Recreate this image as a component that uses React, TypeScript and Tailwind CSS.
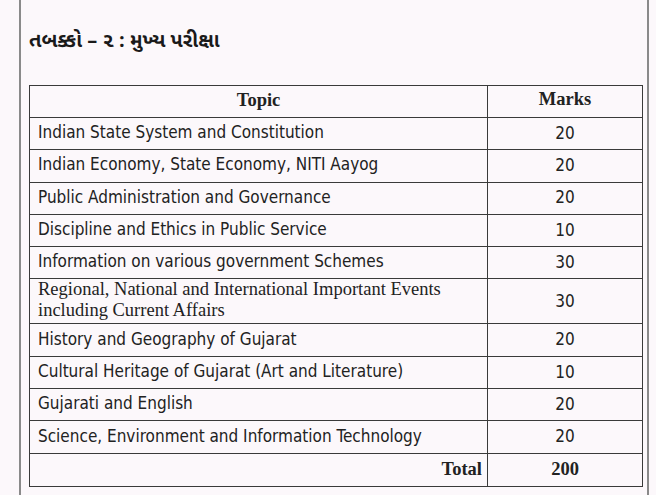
const rows: { topic: string; marks: number; serif?: boolean; tall?: boolean }[] = [
  { topic: "Indian State System and Constitution", marks: 20 },
  { topic: "Indian Economy, State Economy, NITI Aayog", marks: 20 },
  { topic: "Public Administration and Governance", marks: 20 },
  { topic: "Discipline and Ethics in Public Service", marks: 10 },
  { topic: "Information on various government Schemes", marks: 30 },
  {
    topic: "Regional, National and International Important Events including Current Affairs",
    marks: 30,
    serif: true,
    tall: true,
  },
  { topic: "History and Geography of Gujarat", marks: 20 },
  { topic: "Cultural Heritage of Gujarat (Art and Literature)", marks: 10 },
  { topic: "Gujarati and English", marks: 20 },
  { topic: "Science, Environment and Information Technology", marks: 20 },
];

const narrow = "font-['Liberation_Sans_Narrow','DejaVu_Sans_Condensed',sans-serif]";
const serif = "font-['Liberation_Serif','Times_New_Roman',serif]";

export default function App() {
  return (
    <div className="w-[656px] h-[495px] bg-[#fcf8fb] overflow-hidden">
      <div className="ml-[19px] w-[630px] h-full border-l-2 border-r-2 border-[#8a8a8a] pl-[8px] pr-[4px]">
        <h2 className="pt-[27px] h-[85px] text-[20px] font-bold text-[#1a1a1a] font-['Noto_Sans_Gujarati','Noto_Sans','Lohit_Gujarati',sans-serif]">
          તબક્કો – ૨ : મુખ્ય પરીક્ષા
        </h2>
        <table className="w-[614px] border-collapse text-[#222]">
          <thead>
            <tr className="h-[32px]">
              <th className={`border border-[#3a3a3a] w-[458px] pb-[4px] leading-[20px] text-[18.5px] font-bold ${serif}`}>Topic</th>
              <th className={`border border-[#3a3a3a] pb-[6px] leading-[20px] text-[18.5px] font-bold ${serif}`}>Marks</th>
            </tr>
          </thead>
          <tbody>
            {rows.map((r) => (
              <tr key={r.topic} className={r.tall ? "h-[45px]" : "h-[32.3px]"}>
                <td
                  className={`border border-[#3a3a3a] pl-[8px] pr-[30px] pb-[2px] align-middle leading-[21px] ${
                    r.serif ? `${serif} text-[18.5px]` : `${narrow} text-[17px]`
                  }`}
                >
                  {r.topic}
                </td>
                <td className={`border border-[#3a3a3a] text-center text-[17px] ${narrow}`}>{r.marks}</td>
              </tr>
            ))}
            <tr className="h-[33px]">
              <td className={`border border-[#3a3a3a] text-right pr-[5px] text-[18.5px] font-bold ${serif}`}>Total</td>
              <td className={`border border-[#3a3a3a] text-center text-[18.5px] font-bold ${serif}`}>200</td>
            </tr>
          </tbody>
        </table>
      </div>
    </div>
  );
}
